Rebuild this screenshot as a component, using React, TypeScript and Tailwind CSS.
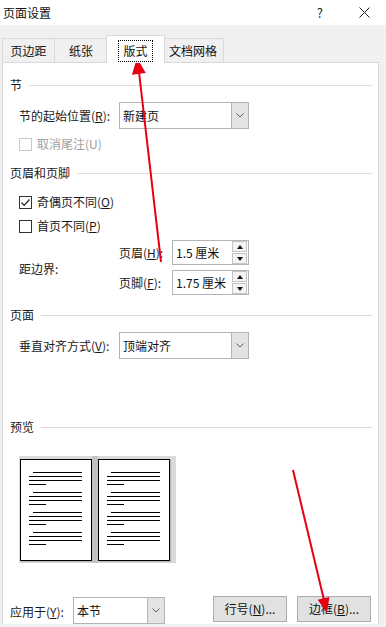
import React from 'react';

const FONT = { fontFamily: '"Noto Sans CJK SC", "Noto Sans", sans-serif' };

function Heading({ label }: { label: string }) {
  return (
    <div className="flex items-center h-[16px] pl-[7px] pr-[6px]">
      <span className="text-[12px] leading-[16px] text-[#1a1a1a]">{label}</span>
      <div className="flex-1 h-px bg-[#dcdcdc] ml-[7px]" />
    </div>
  );
}

function Chevron() {
  return (
    <svg width="8" height="5" viewBox="0 0 8 5">
      <polyline points="0.5,0.5 4,4 7.5,0.5" fill="none" stroke="#606060" strokeWidth="1" />
    </svg>
  );
}

function Select({ value, width }: { value: string; width: string }) {
  return (
    <div className={`flex h-[27px] border border-[#b4b4b4] bg-white ${width}`}>
      <div className="flex-1 flex items-center pl-[3px] text-[12px] text-[#111]">{value}</div>
      <div className="w-[17px] flex items-center justify-center bg-[#e3e3e3] border-l border-[#b4b4b4]">
        <Chevron />
      </div>
    </div>
  );
}

function Checkbox({ checked, disabled, children }: { checked?: boolean; disabled?: boolean; children: React.ReactNode }) {
  return (
    <div className="flex items-center h-[16px] pl-[16px]">
      <div
        className={`w-[13px] h-[13px] border bg-white flex items-center justify-center ${
          disabled ? 'border-[#c8c8c8]' : 'border-[#333]'
        }`}
      >
        {checked && (
          <svg width="11" height="11" viewBox="0 0 11 11">
            <polyline points="1.5,5.5 4.2,8.3 9.5,2.5" fill="none" stroke="#222" strokeWidth="1.2" />
          </svg>
        )}
      </div>
      <span className={`ml-[5px] text-[12px] leading-[16px] ${disabled ? 'text-[#a0a0a0]' : 'text-[#1a1a1a]'}`}>
        {children}
      </span>
    </div>
  );
}

function Spin({ value }: { value: string }) {
  return (
    <div className="flex items-center h-[25px] w-[77px] border border-[#b4b4b4] bg-white pr-[1px]">
      <div className="flex-1 pl-[3px] text-[12px] text-[#111]">{value}</div>
      <div className="flex flex-col gap-px">
        <div className="w-[15px] h-[11px] border border-[#c4c4c4] bg-[#f4f4f4] flex items-center justify-center">
          <svg width="6" height="4" viewBox="0 0 6 4"><polygon points="0,4 3,0 6,4" fill="#111" /></svg>
        </div>
        <div className="w-[15px] h-[11px] border border-[#c4c4c4] bg-[#f4f4f4] flex items-center justify-center">
          <svg width="6" height="4" viewBox="0 0 6 4"><polygon points="0,0 6,0 3,4" fill="#111" /></svg>
        </div>
      </div>
    </div>
  );
}

function Page() {
  const groups = [0, 1, 2, 3];
  return (
    <div className="w-[72px] h-[102px] bg-white border border-black pt-[12px] flex flex-col gap-[7px] shadow-[1px_1px_1px_rgba(0,0,0,0.15)]">
      {groups.map(g => (
        <div key={g} className="flex flex-col gap-[3px]">
          <div className="ml-[12px] w-[49px] h-px bg-black" />
          <div className="ml-[8px] w-[53px] h-px bg-black" />
          <div className="ml-[8px] w-[53px] h-px bg-black" />
          <div className="ml-[8px] w-[17px] h-px bg-black" />
        </div>
      ))}
    </div>
  );
}

function Tab({ label, active, width }: { label: string; active?: boolean; width: string }) {
  if (active) {
    return (
      <div className={`${width} h-[28px] -mx-[2px] bg-white border border-b-0 border-[#d9d9d9] relative z-10 flex items-center justify-center`}>
        <span className="border border-dotted border-black px-[4px] h-[22px] mt-[3px] flex items-center text-[12px] text-[#111]">
          {label}
        </span>
      </div>
    );
  }
  return (
    <div className={`${width} h-[25px] border border-b-0 border-[#d9d9d9] -ml-px first:ml-0 flex items-center justify-center text-[12px] text-[#111]`}>
      {label}
    </div>
  );
}

export default function App() {
  return (
    <div className="w-[386px] h-[627px] bg-[#f0f0f0] relative overflow-hidden select-none" style={FONT}>
      {/* Title bar */}
      <div className="h-[25px] bg-white flex items-center pl-[3px] pr-[16px]">
        <span className="text-[12px] text-[#111]">页面设置</span>
        <span className="ml-auto text-[13px] text-[#222]">?</span>
        <svg className="ml-[36px]" width="11" height="11" viewBox="0 0 11 11">
          <path d="M0.5 0.5 L10.5 10.5 M10.5 0.5 L0.5 10.5" stroke="#222" strokeWidth="1" />
        </svg>
      </div>

      {/* Tabs */}
      <div className="flex items-end h-[38px] pl-[2px]">
        <Tab label="页边距" width="w-[53px]" />
        <Tab label="纸张" width="w-[54px]" />
        <Tab label="版式" width="w-[59px]" active />
        <Tab label="文档网格" width="w-[62px]" />
      </div>

      {/* Panel */}
      <div className="ml-[2px] w-[377px] h-[562px] -mt-px bg-white border border-b-0 border-[#d9d9d9] overflow-hidden flex flex-col">
        <div className="mt-[14px]"><Heading label="节" /></div>

        <div className="mt-[9px] flex items-center pl-[16px]">
          <span className="w-[100px] text-[12px] text-[#1a1a1a]">节的起始位置(<u>R</u>):</span>
          <Select value="新建页" width="w-[130px]" />
        </div>

        <div className="mt-[7px]">
          <Checkbox disabled>取消尾注(U)</Checkbox>
        </div>

        <div className="mt-[13px]"><Heading label="页眉和页脚" /></div>

        <div className="mt-[13px]">
          <Checkbox checked>奇偶页不同(<u>O</u>)</Checkbox>
        </div>
        <div className="mt-[8px]">
          <Checkbox>首页不同(<u>P</u>)</Checkbox>
        </div>

        <div className="mt-[6px] flex items-center pl-[16px]">
          <span className="w-[100px] text-[12px] text-[#1a1a1a] mt-[2px]">距边界:</span>
          <div className="flex flex-col gap-[5px]">
            <div className="flex items-center">
              <span className="w-[53px] text-[12px] text-[#1a1a1a]">页眉(<u>H</u>):</span>
              <Spin value="1.5 厘米" />
            </div>
            <div className="flex items-center">
              <span className="w-[53px] text-[12px] text-[#1a1a1a]">页脚(<u>F</u>):</span>
              <Spin value="1.75 厘米" />
            </div>
          </div>
        </div>

        <div className="mt-[12px]"><Heading label="页面" /></div>

        <div className="mt-[9px] flex items-center pl-[16px]">
          <span className="w-[100px] text-[12px] text-[#1a1a1a]">垂直对齐方式(<u>V</u>):</span>
          <Select value="顶端对齐" width="w-[130px]" />
        </div>

        <div className="mt-[60px]"><Heading label="预览" /></div>

        <div className="mt-[21px] ml-[16px] w-[157px] h-[113px] bg-[#dadada] flex items-center">
          <div className="ml-px"><Page /></div>
          <div className="w-[6px] h-full bg-[#c2c2c2]" />
          <Page />
        </div>

        <div className="mt-[34px] flex items-start pl-[7px]">
          <span className="w-[63px] mt-[6px] text-[12px] text-[#1a1a1a]">应用于(<u>Y</u>):</span>
          <Select value="本节" width="w-[92px]" />
          <div className="ml-[48px] -mt-px w-[74px] h-[26px] bg-[#e1e1e1] border border-[#adadad] flex items-center justify-center text-[12px] text-[#111]">
            行号(<u>N</u>)...
          </div>
          <div className="ml-[10px] -mt-px w-[74px] h-[26px] bg-[#e1e1e1] border border-[#adadad] flex items-center justify-center text-[12px] text-[#111]">
            边框(<u>B</u>)...
          </div>
        </div>
      </div>
      <div className="h-[3px] bg-[#f0f0f0]" />

      {/* Red annotation arrows */}
      <svg className="absolute inset-0 pointer-events-none" width="386" height="627" viewBox="0 0 386 627">
        <line x1="161" y1="262" x2="139" y2="72" stroke="#e60012" strokeWidth="2" />
        <polygon points="137,58 145.8,73.1 131.9,74.7" fill="#e60012" />
        <line x1="293" y1="470" x2="324" y2="600" stroke="#e60012" strokeWidth="2" />
        <polygon points="327,613 329.4,597 317.7,599.8" fill="#e60012" />
      </svg>
    </div>
  );
}
